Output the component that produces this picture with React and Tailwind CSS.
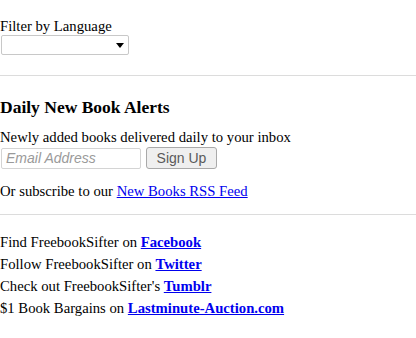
const follow = [
  { text: "Find FreebookSifter on ", link: "Facebook" },
  { text: "Follow FreebookSifter on ", link: "Twitter" },
  { text: "Check out FreebookSifter's ", link: "Tumblr" },
  { text: "$1 Book Bargains on ", link: "Lastminute-Auction.com" },
];

export default function App() {
  return (
    <div className="w-[416px] h-[338px] bg-white text-black font-['Liberation_Serif',serif] text-[14.7px] leading-4">
      {/* ── Language filter ── */}
      <div className="pt-[18px]">
        <div>Filter by Language</div>
        <div className="mt-px ml-px w-[128px] h-[20px] border border-[#c8c8c8] rounded-[2px] flex items-center justify-end pr-[4px]">
          <svg width="8" height="5" viewBox="0 0 8 5">
            <path d="M0 0h8L4 5z" fill="black" />
          </svg>
        </div>
      </div>

      <div className="mt-[20px] h-px bg-[#dcdcdc]" />

      {/* ── Daily alerts ── */}
      <div className="pt-[21px]">
        <h3 className="text-[17.5px] leading-5 font-bold">Daily New Book Alerts</h3>
        <p className="mt-[12px]">Newly added books delivered daily to your inbox</p>
        <div className="flex items-center gap-[5px] mt-[2px]">
          <div className="ml-px w-[140px] h-[21px] border border-[#d4d4d4] rounded-[2px] flex items-center pl-[4px] font-['Liberation_Sans',sans-serif] italic text-[#9a9a9a] text-[14px]">
            Email Address
          </div>
          <div className="w-[71px] h-[22px] border border-[#a9a9a9] rounded-[3px] bg-[#efefef] flex items-center justify-center font-['Liberation_Sans',sans-serif] text-[#5a5a5a] text-[14px]">
            Sign Up
          </div>
        </div>
        <p className="mt-[14px]">
          Or subscribe to our <a href="#" className="text-[#0000ee] underline">New Books RSS Feed</a>
        </p>
      </div>

      <div className="mt-[15px] h-px bg-[#dcdcdc]" />

      {/* ── Follow links ── */}
      <div className="pt-[19px] flex flex-col gap-[6px]">
        {follow.map(({ text, link }) => (
          <div key={link}>
            {text}
            <a href="#" className="text-[#0000ee] underline font-bold">{link}</a>
          </div>
        ))}
      </div>
    </div>
  );
}
